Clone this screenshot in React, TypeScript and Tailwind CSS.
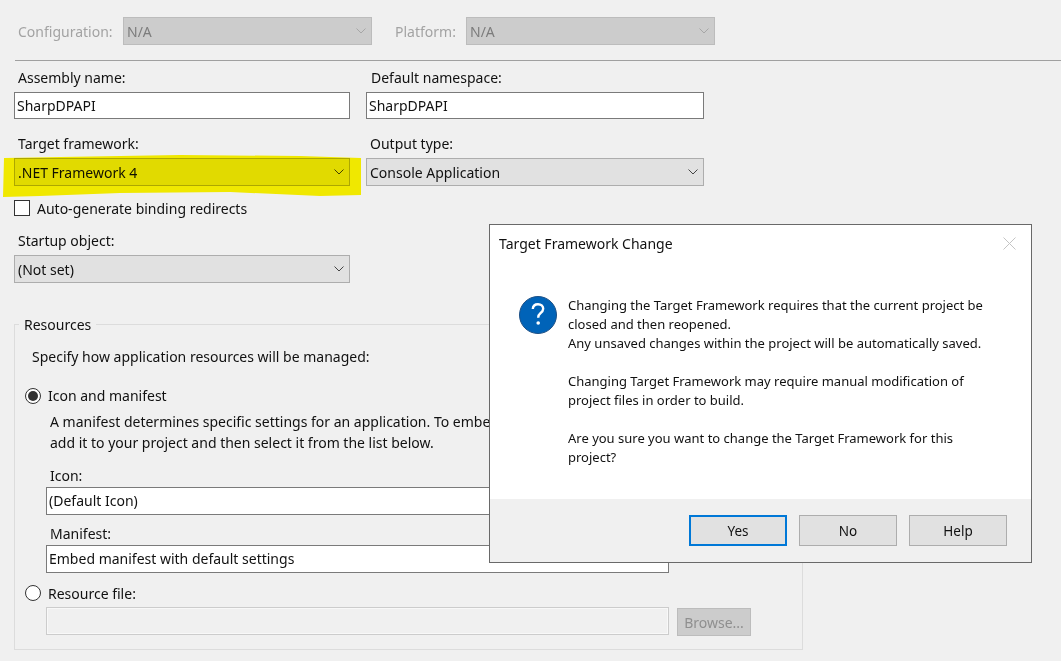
const Chevron = ({ color = "#444444" }: { color?: string }) => (
  <svg width="10" height="6" viewBox="0 0 10 6" fill="none" className="shrink-0">
    <path d="M0.5 0.5 L5 5 L9.5 0.5" stroke={color} strokeWidth="1" />
  </svg>
);

const Label = ({ children, className = "" }: { children: string; className?: string }) => (
  <div className={`h-[20px] leading-[20px] whitespace-nowrap ${className}`}>{children}</div>
);

const Select = ({ text, className = "" }: { text: string; className?: string }) => (
  <div className={`flex items-center justify-between h-[28px] border border-[#adadad] bg-[#e1e1e1] pl-[3px] pr-[5px] ${className}`}>
    <span className="whitespace-nowrap">{text}</span>
    <Chevron />
  </div>
);

const DisabledSelect = ({ text, className = "" }: { text: string; className?: string }) => (
  <div className={`flex items-center justify-between h-[28px] border border-[#bcbcbc] bg-[#cccccc] pl-[3px] pr-[5px] text-[#7c7c7c] ${className}`}>
    <span>{text}</span>
    <Chevron color="#a6a6a6" />
  </div>
);

const TextInput = ({ text, className = "" }: { text: string; className?: string }) => (
  <div className={`flex items-center border border-[#7a7a7a] bg-white pl-[2px] whitespace-nowrap ${className}`}>{text}</div>
);

const Radio = ({ checked }: { checked?: boolean }) => (
  <div className="flex items-center justify-center w-[16px] h-[16px] rounded-full border border-[#333333] bg-white shrink-0">
    {checked && <div className="w-[10px] h-[10px] rounded-full bg-[#333333]" />}
  </div>
);

const DialogButton = ({ text, focused }: { text: string; focused?: boolean }) => (
  <div className={`flex items-center justify-center w-[98px] h-[31px] pt-[2px] bg-[#e1e1e1] text-[13.5px] ${focused ? "border-2 border-[#0078d7]" : "border border-[#adadad]"}`}>
    {text}
  </div>
);

export default function App() {
  return (
    <div
      className="relative w-[1061px] h-[661px] overflow-hidden bg-[#f0f0f0] text-[14px] text-[#111111] pt-[17px]"
      style={{ fontFamily: '"Noto Sans", sans-serif' }}
    >
      <div className="flex items-center pl-[18px]">
        <span className="w-[105px] text-[#a3a3a3]">Configuration:</span>
        <DisabledSelect text="N/A" className="w-[249px]" />
        <span className="ml-[23px] w-[71px] text-[#a3a3a3]">Platform:</span>
        <DisabledSelect text="N/A" className="w-[249px]" />
      </div>
      <div className="mt-[15px] ml-[15px] h-px bg-[#a0a0a0]" />

      <div className="flex ml-[14px] mt-[7px]">
        <div className="w-[336px]">
          <Label className="pl-[4px]">Assembly name:</Label>
          <TextInput text="SharpDPAPI" className="mt-[4px] h-[27px]" />
        </div>
        <div className="w-[338px] ml-[16px]">
          <Label className="pl-[5px]">Default namespace:</Label>
          <TextInput text="SharpDPAPI" className="mt-[4px] h-[27px]" />
        </div>
      </div>

      <div className="flex ml-[14px] mt-[15px]">
        <div className="w-[336px]">
          <Label className="pl-[4px]">Target framework:</Label>
          <Select text=".NET Framework 4" className="mt-[4px]" />
        </div>
        <div className="w-[338px] ml-[16px]">
          <Label className="pl-[4px]">Output type:</Label>
          <Select text="Console Application" className="mt-[4px]" />
        </div>
      </div>

      <div className="flex items-center ml-[14px] mt-[14px] h-[16px]">
        <div className="w-[16px] h-[16px] border border-[#333333] bg-white" />
        <span className="ml-[7px]">Auto-generate binding redirects</span>
      </div>

      <div className="ml-[14px] mt-[15px] w-[336px]">
        <Label className="pl-[4px]">Startup object:</Label>
        <Select text="(Not set)" className="mt-[4px]" />
      </div>

      <div className="relative ml-[14px] mt-[41px] w-[789px] h-[326px] border border-[#dcdcdc] pl-[10px] pt-[22px]">
        <div className="absolute left-[4px] top-[-10px] bg-[#f0f0f0] px-[5px] h-[20px] leading-[20px]">Resources</div>
        <Label className="pl-[7px]">Specify how application resources will be managed:</Label>
        <div className="flex items-center h-[20px] mt-[19px]">
          <Radio checked />
          <span className="ml-[7px] -mt-[2px]">Icon and manifest</span>
        </div>
        <div className="mt-[5px] ml-[25px] leading-[21px] whitespace-nowrap">
          <div>A manifest determines specific settings for an application. To embed a custom manifest, first</div>
          <div>add it to your project and then select it from the list below.</div>
        </div>
        <Label className="mt-[13px] ml-[25px]">Icon:</Label>
        <TextInput text="(Default Icon)" className="mt-px ml-[21px] w-[623px] h-[28px] pb-[2px]" />
        <Label className="mt-[9px] ml-[25px]">Manifest:</Label>
        <TextInput text="Embed manifest with default settings" className="mt-px ml-[21px] w-[623px] h-[28px] pb-[2px]" />
        <div className="flex items-center h-[20px] mt-[10px]">
          <Radio />
          <span className="ml-[7px]">Resource file:</span>
        </div>
        <div className="flex items-start mt-[4px] ml-[21px]">
          <div className="w-[623px] h-[28px] border border-[#cccccc] bg-[#f0f0f0] shadow-[inset_0_0_0_1px_#f8f8f8]" />
          <div className="flex items-center justify-center w-[74px] h-[28px] ml-[8px] mt-px border border-[#bcbcbc] bg-[#cccccc] text-[#8f8f8f]">
            Browse...
          </div>
        </div>
      </div>

      {/* yellow marker stroke over the target framework box */}
      <svg className="absolute left-0 top-0 mix-blend-multiply pointer-events-none" width="1061" height="661" viewBox="0 0 1061 661">
        <path
          d="M4 158 L60 157 L180 155 L300 156 L361 158 L361 195 L320 196 L230 192 L120 193 L40 196 L3 197 Z"
          fill="#fff700"
        />
      </svg>

      <div className="absolute left-[489px] top-[224px] flex flex-col w-[543px] h-[339px] border border-[#696969] bg-white">
        <div className="relative pl-[9px] pt-[9px] h-[71px] leading-[20px]">
          Target Framework Change
          <svg className="absolute right-[15px] top-[12px]" width="13" height="13" viewBox="0 0 13 13" fill="none">
            <path d="M0.5 0.5 L12.5 12.5 M12.5 0.5 L0.5 12.5" stroke="#c4c4c4" strokeWidth="1" />
          </svg>
        </div>
        <div className="flex flex-1 pl-[29px]">
          <svg className="shrink-0" width="38" height="38" viewBox="0 0 38 38">
            <circle cx="19" cy="19" r="18.5" fill="#0063b8" stroke="#1c4f85" strokeWidth="1" />
            <path
              d="M13.8 13 C14 9.8 16.2 8.2 19 8.2 C22 8.2 24.2 10 24.2 12.8 C24.2 15 23 16 21.4 17.2 C20 18.3 19.2 19.2 19.2 21.8"
              fill="none"
              stroke="#ffffff"
              strokeWidth="2.4"
            />
            <circle cx="19.2" cy="27" r="1.8" fill="#ffffff" />
          </svg>
          <div className="ml-[11px] text-[13px] leading-[19px] whitespace-nowrap">
            <div>Changing the Target Framework requires that the current project be</div>
            <div>closed and then reopened.</div>
            <div>Any unsaved changes within the project will be automatically saved.</div>
            <div className="mt-[19px]">Changing Target Framework may require manual modification of</div>
            <div>project files in order to build.</div>
            <div className="mt-[19px]">Are you sure you want to change the Target Framework for this</div>
            <div>project?</div>
          </div>
        </div>
        <div className="flex justify-end gap-[12px] h-[63px] bg-[#f0f0f0] pt-[16px] pr-[24px]">
          <DialogButton text="Yes" focused />
          <DialogButton text="No" />
          <DialogButton text="Help" />
        </div>
      </div>
    </div>
  );
}
